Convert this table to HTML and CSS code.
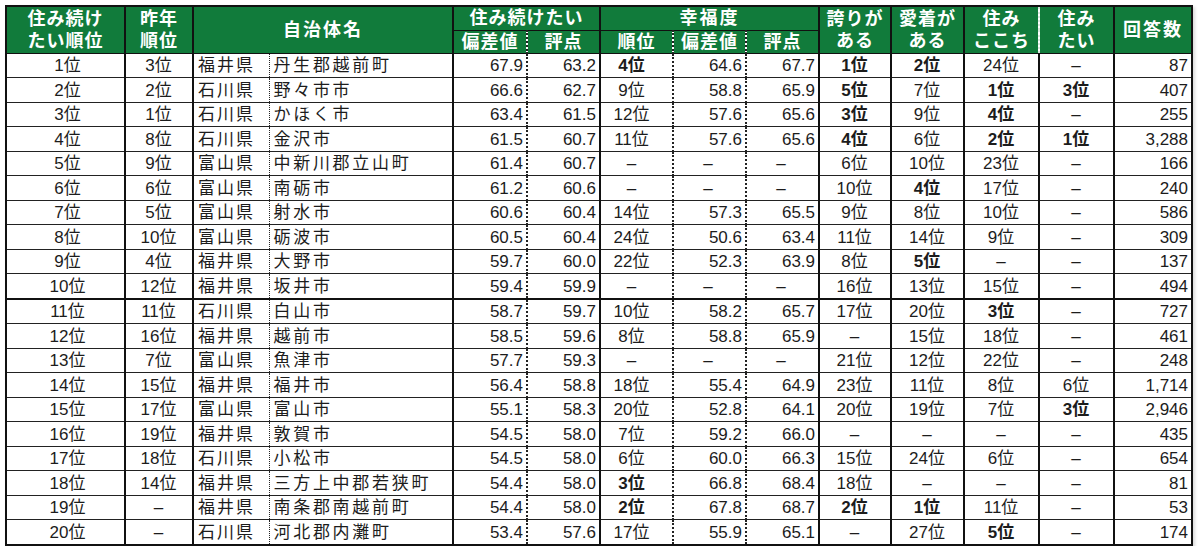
FILE: index.html
```html
<!DOCTYPE html>
<html lang="ja">
<head>
<meta charset="utf-8">
<title>住み続けたい街ランキング</title>
<link rel="stylesheet" href="styles.css">
</head>
<body>
<table class="rank">
<colgroup>
<col class="w1"><col class="w2"><col class="w3"><col class="w4"><col class="w5"><col class="w6"><col class="w7"><col class="w8"><col class="w9"><col class="w10"><col class="w11"><col class="w12"><col class="w13"><col class="w14">
</colgroup>
<thead>
<tr class="h1">
<th rowspan="2" class="c1">住み続け<br>たい順位</th>
<th rowspan="2" class="c2">昨年<br>順位</th>
<th rowspan="2" colspan="2" class="c4 wide">自治体名</th>
<th colspan="2" class="c6">住み続けたい</th>
<th colspan="3" class="c9 wide">幸福度</th>
<th rowspan="2" class="c10">誇りが<br>ある</th>
<th rowspan="2" class="c11">愛着が<br>ある</th>
<th rowspan="2" class="c12h">住み<br>ここち</th>
<th rowspan="2" class="c13">住み<br>たい</th>
<th rowspan="2" class="c14 wide">回答数</th>
</tr>
<tr class="h2">
<th class="c5">偏差値</th><th class="c6">評点</th>
<th class="c7">順位</th><th class="c8">偏差値</th><th class="c9">評点</th>
</tr>
</thead>
<tbody>
<tr><td class="c1">1位</td><td class="c2">3位</td><td class="c3">福井県</td><td class="c4">丹生郡越前町</td><td class="c5">67.9</td><td class="c6">63.2</td><td class="c7 b">4位</td><td class="c8">64.6</td><td class="c9">67.7</td><td class="c10 b">1位</td><td class="c11 b">2位</td><td class="c12">24位</td><td class="c13">–</td><td class="c14">87</td></tr>
<tr><td class="c1">2位</td><td class="c2">2位</td><td class="c3">石川県</td><td class="c4">野々市市</td><td class="c5">66.6</td><td class="c6">62.7</td><td class="c7">9位</td><td class="c8">58.8</td><td class="c9">65.9</td><td class="c10 b">5位</td><td class="c11">7位</td><td class="c12 b">1位</td><td class="c13 b">3位</td><td class="c14">407</td></tr>
<tr><td class="c1">3位</td><td class="c2">1位</td><td class="c3">石川県</td><td class="c4">かほく市</td><td class="c5">63.4</td><td class="c6">61.5</td><td class="c7">12位</td><td class="c8">57.6</td><td class="c9">65.6</td><td class="c10 b">3位</td><td class="c11">9位</td><td class="c12 b">4位</td><td class="c13">–</td><td class="c14">255</td></tr>
<tr><td class="c1">4位</td><td class="c2">8位</td><td class="c3">石川県</td><td class="c4">金沢市</td><td class="c5">61.5</td><td class="c6">60.7</td><td class="c7">11位</td><td class="c8">57.6</td><td class="c9">65.6</td><td class="c10 b">4位</td><td class="c11">6位</td><td class="c12 b">2位</td><td class="c13 b">1位</td><td class="c14">3,288</td></tr>
<tr><td class="c1">5位</td><td class="c2">9位</td><td class="c3">富山県</td><td class="c4">中新川郡立山町</td><td class="c5">61.4</td><td class="c6">60.7</td><td class="c7">–</td><td class="c8 d">–</td><td class="c9 d">–</td><td class="c10">6位</td><td class="c11">10位</td><td class="c12">23位</td><td class="c13">–</td><td class="c14">166</td></tr>
<tr><td class="c1">6位</td><td class="c2">6位</td><td class="c3">富山県</td><td class="c4">南砺市</td><td class="c5">61.2</td><td class="c6">60.6</td><td class="c7">–</td><td class="c8 d">–</td><td class="c9 d">–</td><td class="c10">10位</td><td class="c11 b">4位</td><td class="c12">17位</td><td class="c13">–</td><td class="c14">240</td></tr>
<tr><td class="c1">7位</td><td class="c2">5位</td><td class="c3">富山県</td><td class="c4">射水市</td><td class="c5">60.6</td><td class="c6">60.4</td><td class="c7">14位</td><td class="c8">57.3</td><td class="c9">65.5</td><td class="c10">9位</td><td class="c11">8位</td><td class="c12">10位</td><td class="c13">–</td><td class="c14">586</td></tr>
<tr><td class="c1">8位</td><td class="c2">10位</td><td class="c3">富山県</td><td class="c4">砺波市</td><td class="c5">60.5</td><td class="c6">60.4</td><td class="c7">24位</td><td class="c8">50.6</td><td class="c9">63.4</td><td class="c10">11位</td><td class="c11">14位</td><td class="c12">9位</td><td class="c13">–</td><td class="c14">309</td></tr>
<tr><td class="c1">9位</td><td class="c2">4位</td><td class="c3">福井県</td><td class="c4">大野市</td><td class="c5">59.7</td><td class="c6">60.0</td><td class="c7">22位</td><td class="c8">52.3</td><td class="c9">63.9</td><td class="c10">8位</td><td class="c11 b">5位</td><td class="c12">–</td><td class="c13">–</td><td class="c14">137</td></tr>
<tr class="sep"><td class="c1">10位</td><td class="c2">12位</td><td class="c3">福井県</td><td class="c4">坂井市</td><td class="c5">59.4</td><td class="c6">59.9</td><td class="c7">–</td><td class="c8 d">–</td><td class="c9 d">–</td><td class="c10">16位</td><td class="c11">13位</td><td class="c12">15位</td><td class="c13">–</td><td class="c14">494</td></tr>
<tr><td class="c1">11位</td><td class="c2">11位</td><td class="c3">石川県</td><td class="c4">白山市</td><td class="c5">58.7</td><td class="c6">59.7</td><td class="c7">10位</td><td class="c8">58.2</td><td class="c9">65.7</td><td class="c10">17位</td><td class="c11">20位</td><td class="c12 b">3位</td><td class="c13">–</td><td class="c14">727</td></tr>
<tr><td class="c1">12位</td><td class="c2">16位</td><td class="c3">福井県</td><td class="c4">越前市</td><td class="c5">58.5</td><td class="c6">59.6</td><td class="c7">8位</td><td class="c8">58.8</td><td class="c9">65.9</td><td class="c10">–</td><td class="c11">15位</td><td class="c12">18位</td><td class="c13">–</td><td class="c14">461</td></tr>
<tr><td class="c1">13位</td><td class="c2">7位</td><td class="c3">富山県</td><td class="c4">魚津市</td><td class="c5">57.7</td><td class="c6">59.3</td><td class="c7">–</td><td class="c8 d">–</td><td class="c9 d">–</td><td class="c10">21位</td><td class="c11">12位</td><td class="c12">22位</td><td class="c13">–</td><td class="c14">248</td></tr>
<tr><td class="c1">14位</td><td class="c2">15位</td><td class="c3">福井県</td><td class="c4">福井市</td><td class="c5">56.4</td><td class="c6">58.8</td><td class="c7">18位</td><td class="c8">55.4</td><td class="c9">64.9</td><td class="c10">23位</td><td class="c11">11位</td><td class="c12">8位</td><td class="c13">6位</td><td class="c14">1,714</td></tr>
<tr><td class="c1">15位</td><td class="c2">17位</td><td class="c3">富山県</td><td class="c4">富山市</td><td class="c5">55.1</td><td class="c6">58.3</td><td class="c7">20位</td><td class="c8">52.8</td><td class="c9">64.1</td><td class="c10">20位</td><td class="c11">19位</td><td class="c12">7位</td><td class="c13 b">3位</td><td class="c14">2,946</td></tr>
<tr><td class="c1">16位</td><td class="c2">19位</td><td class="c3">福井県</td><td class="c4">敦賀市</td><td class="c5">54.5</td><td class="c6">58.0</td><td class="c7">7位</td><td class="c8">59.2</td><td class="c9">66.0</td><td class="c10">–</td><td class="c11">–</td><td class="c12">–</td><td class="c13">–</td><td class="c14">435</td></tr>
<tr><td class="c1">17位</td><td class="c2">18位</td><td class="c3">石川県</td><td class="c4">小松市</td><td class="c5">54.5</td><td class="c6">58.0</td><td class="c7">6位</td><td class="c8">60.0</td><td class="c9">66.3</td><td class="c10">15位</td><td class="c11">24位</td><td class="c12">6位</td><td class="c13">–</td><td class="c14">654</td></tr>
<tr><td class="c1">18位</td><td class="c2">14位</td><td class="c3">福井県</td><td class="c4">三方上中郡若狭町</td><td class="c5">54.4</td><td class="c6">58.0</td><td class="c7 b">3位</td><td class="c8">66.8</td><td class="c9">68.4</td><td class="c10">18位</td><td class="c11">–</td><td class="c12">–</td><td class="c13">–</td><td class="c14">81</td></tr>
<tr><td class="c1">19位</td><td class="c2">–</td><td class="c3">福井県</td><td class="c4">南条郡南越前町</td><td class="c5">54.4</td><td class="c6">58.0</td><td class="c7 b">2位</td><td class="c8">67.8</td><td class="c9">68.7</td><td class="c10 b">2位</td><td class="c11 b">1位</td><td class="c12">11位</td><td class="c13">–</td><td class="c14">53</td></tr>
<tr><td class="c1">20位</td><td class="c2">–</td><td class="c3">石川県</td><td class="c4">河北郡内灘町</td><td class="c5">53.4</td><td class="c6">57.6</td><td class="c7">17位</td><td class="c8">55.9</td><td class="c9">65.1</td><td class="c10">–</td><td class="c11">27位</td><td class="c12 b">5位</td><td class="c13">–</td><td class="c14">174</td></tr>
</tbody>
</table>
</body>
</html>
```
FILE: styles.css
```css
html, body {
  margin: 0;
  padding: 0;
  background: #ffffff;
}
body {
  padding: 5px 0 0 5px;
  font-family: "Liberation Sans", "Noto Sans CJK JP", sans-serif;
  color: #1c1c1c;
}
.rank {
  border-collapse: collapse;
  table-layout: fixed;
  width: 1186px;
  border: 2px solid #111;
  font-size: 17px;
  box-shadow: 2px 2px 3px rgba(0,0,0,0.15);
}
.w1 { width: 119px; }
.w2 { width: 68px; }
.w3 { width: 76px; }
.w4 { width: 184px; }
.w5 { width: 74px; }
.w6 { width: 73px; }
.w7 { width: 73px; }
.w8 { width: 73px; }
.w9 { width: 73px; }
.w10 { width: 72px; }
.w11 { width: 73px; }
.w12 { width: 75px; }
.w13 { width: 75px; }
.w14 { width: 78px; }

.rank th {
  background: #117b3b;
  color: #ffffff;
  font-weight: bold;
  font-size: 18px;
  line-height: 22px;
  letter-spacing: 1px;
  padding: 0;
  text-align: center;
  vertical-align: middle;
  border-top: 1px solid #111;
  border-bottom: 1px solid #111;
  border-left: none;
  overflow: hidden;
  white-space: nowrap;
}
.rank th.wide { letter-spacing: 2px; }
.rank .h1 { height: 24px; }
.rank .h2 { height: 23px; }
.rank .h2 th { line-height: 20px; }

.rank td {
  height: 23.5px;
  padding: 0 4px 0 3px;
  line-height: 22px;
  text-align: center;
  vertical-align: bottom;
  white-space: nowrap;
  overflow: hidden;
  border-top: 1px solid #222;
  border-bottom: 1px solid #222;
  border-left: none;
}
.rank tr.sep td { border-bottom: 2px solid #111; }

.c1, .c2, .c4, .c6, .c9, .c10, .c11, .c13, .c14 { border-right: 2px solid #111; }
.rank .c3 { border-right: 1px dotted #222; text-align: left; letter-spacing: 2px; padding-left: 4px; }
.rank td.c4 { text-align: left; letter-spacing: 2.7px; padding-left: 4px; }
.c5, .c7, .c8 { border-right: 2px dotted #222; }
.c12 { border-right: 2px solid #111; }
.c12h { border-right: 2px dotted #d8e8dc; }
.rank td.c1 { padding-left: 7px; padding-right: 3px; }
.rank td.c7 { padding-left: 0; padding-right: 10px; }
.rank td.c5, .rank td.c6, .rank td.c8, .rank td.c9, .rank td.c14 { text-align: right; padding-right: 3px; padding-left: 0; }
.rank td.d { text-align: center; }
.rank td.b { font-weight: bold; }
```
